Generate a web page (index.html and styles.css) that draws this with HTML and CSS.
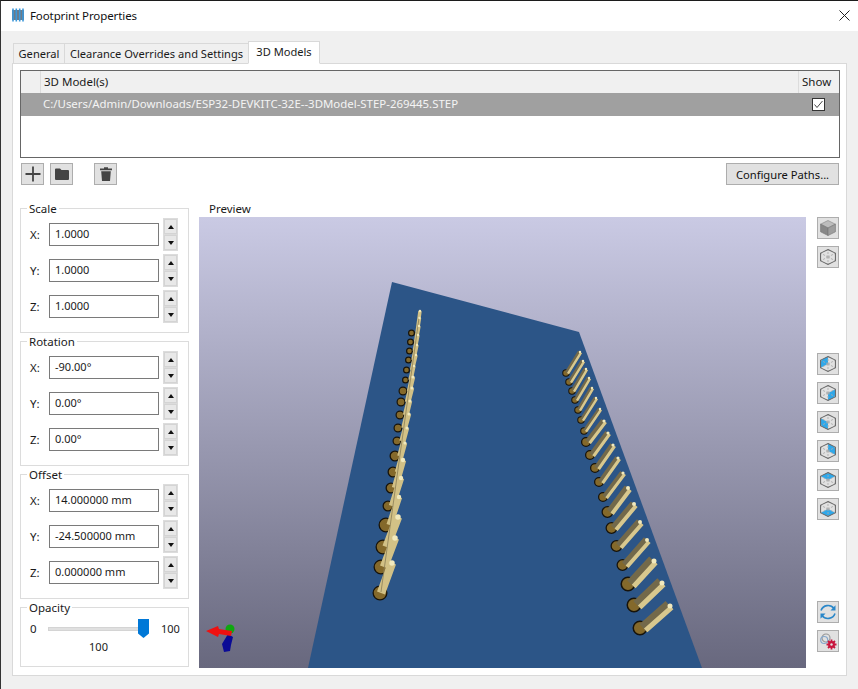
FILE: index.html
```html
<!DOCTYPE html>
<html lang="en">
<head>
<meta charset="utf-8">
<title>Footprint Properties</title>
<link rel="stylesheet" href="styles.css">
</head>
<body>
<svg class="defs" width="0" height="0" aria-hidden="true">
  <defs>
    <g id="cube">
      <path class="cube-back" d="M11 11V3.5M11 11L4.5 14.8M11 11L17.5 14.8M11 11L4.5 7.2M11 11L17.5 7.2M11 11V18.5"/>
      <path class="cube-line" d="M11 3.5L17.5 7.2V14.8L11 18.5L4.5 14.8V7.2Z"/>
    </g>
  </defs>
</svg>
<div class="window">
  <header class="titlebar">
    <svg class="app-icon" width="14" height="14" viewBox="0 0 14 14">
      <rect class="ai-body" x="1" y="2" width="12" height="10"/>
      <path class="ai-pins" d="M2 0.5V13.5M5.3 0.5V13.5M8.7 0.5V13.5M12 0.5V13.5"/>
    </svg>
    <span class="title">Footprint Properties</span>
    <svg class="close" width="11" height="11" viewBox="0 0 11 11"><path d="M0.5 0.5L10.5 10.5M10.5 0.5L0.5 10.5"/></svg>
  </header>
  <main class="content">
    <nav class="tabs">
      <span class="tab tab-general">General</span>
      <span class="tab tab-clear">Clearance Overrides and Settings</span>
      <span class="tab tab-active">3D Models</span>
    </nav>
    <section class="pane">
      <div class="grid">
        <div class="grid-head">
          <span class="corner"></span>
          <span class="head-model">3D Model(s)</span>
          <span class="head-show">Show</span>
        </div>
        <div class="grid-row">
          <span class="corner-row"></span>
          <span class="path">C:/Users/Admin/Downloads/ESP32-DEVKITC-32E--3DModel-STEP-269445.STEP</span>
          <span class="cell-show">
            <svg class="check" width="13" height="13" viewBox="0 0 13 13"><rect x="0.5" y="0.5" width="12" height="12"/><path d="M2.5 6.5L5 9.5L10.5 3"/></svg>
          </span>
        </div>
      </div>
      <div class="toolbar">
        <button class="btn icon-btn">
          <svg width="18" height="18" viewBox="0 0 18 18"><path class="plus" d="M9 1.5V16.5M1.5 9H16.5"/></svg>
        </button>
        <button class="btn icon-btn">
          <svg width="18" height="18" viewBox="0 0 18 18"><path class="solid" d="M2 4.5Q2 3.5 3 3.5H7L8.5 5H15Q16 5 16 6V14Q16 15 15 15H3Q2 15 2 14Z"/></svg>
        </button>
        <button class="btn icon-btn trash">
          <svg width="18" height="18" viewBox="0 0 18 18"><path class="solid" d="M3 3.5H7V2.2H11V3.5H15V5.2H3ZM4.2 6.2H13.8L13 16H5Z"/></svg>
        </button>
        <button class="btn paths-btn">Configure Paths...</button>
      </div>
      <div class="main">
        <div class="side">
          <div class="group">
            <span class="legend">Scale</span>
            <div class="field"><span class="axis">X:</span><span class="input">1.0000</span><span class="spin"><span class="sb"><i class="up"></i></span><span class="sb"><i class="down"></i></span></span></div>
            <div class="field"><span class="axis">Y:</span><span class="input">1.0000</span><span class="spin"><span class="sb"><i class="up"></i></span><span class="sb"><i class="down"></i></span></span></div>
            <div class="field"><span class="axis">Z:</span><span class="input">1.0000</span><span class="spin"><span class="sb"><i class="up"></i></span><span class="sb"><i class="down"></i></span></span></div>
          </div>
          <div class="group">
            <span class="legend">Rotation</span>
            <div class="field"><span class="axis">X:</span><span class="input">-90.00°</span><span class="spin"><span class="sb"><i class="up"></i></span><span class="sb"><i class="down"></i></span></span></div>
            <div class="field"><span class="axis">Y:</span><span class="input">0.00°</span><span class="spin"><span class="sb"><i class="up"></i></span><span class="sb"><i class="down"></i></span></span></div>
            <div class="field"><span class="axis">Z:</span><span class="input">0.00°</span><span class="spin"><span class="sb"><i class="up"></i></span><span class="sb"><i class="down"></i></span></span></div>
          </div>
          <div class="group">
            <span class="legend">Offset</span>
            <div class="field"><span class="axis">X:</span><span class="input">14.000000 mm</span><span class="spin"><span class="sb"><i class="up"></i></span><span class="sb"><i class="down"></i></span></span></div>
            <div class="field"><span class="axis">Y:</span><span class="input">-24.500000 mm</span><span class="spin"><span class="sb"><i class="up"></i></span><span class="sb"><i class="down"></i></span></span></div>
            <div class="field"><span class="axis">Z:</span><span class="input">0.000000 mm</span><span class="spin"><span class="sb"><i class="up"></i></span><span class="sb"><i class="down"></i></span></span></div>
          </div>
          <div class="group group-opacity">
            <span class="legend">Opacity</span>
            <div class="slider-row">
              <span class="s-min">0</span>
              <span class="track"><span class="thumb"></span></span>
              <span class="s-max">100</span>
            </div>
            <div class="s-value">100</div>
          </div>
        </div>
        <div class="preview-col">
          <div class="preview-label">Preview</div>
          <svg class="scene" width="607" height="451" viewBox="199 217 607 451">
            <defs>
              <linearGradient id="sky" x1="0" y1="0" x2="0" y2="1">
                <stop offset="0" stop-color="#cacae4"/>
                <stop offset="1" stop-color="#68687e"/>
              </linearGradient>
            </defs>
            <rect x="199" y="217" width="607" height="451" fill="url(#sky)"/>
            <polygon class="board" points="392,282 579,332 702,668 308,668"/>

            <!-- right header: solder pads -->
            <g transform="translate(-3 0)">
              <path class="pad-o" stroke-width="15" d="M643 628h0M637 605h0M631 584h0"/>
              <path class="pad-i" stroke-width="12" d="M643 628h0M637 605h0M631 584h0"/>
            </g>
            <g transform="translate(-2.5 0)">
              <path class="pad-o" stroke-width="12" d="M625 565h0M619 546h0M614 528h0M610 512h0"/>
              <path class="pad-i" stroke-width="9.5" d="M625 565h0M619 546h0M614 528h0M610 512h0"/>
            </g>
            <g transform="translate(-2 0)">
              <path class="pad-o" stroke-width="10" d="M605 497h0M601 482h0M597 468h0M592 455h0M588 442h0"/>
              <path class="pad-i" stroke-width="7.5" d="M605 497h0M601 482h0M597 468h0M592 455h0M588 442h0"/>
            </g>
            <g transform="translate(-1 0)">
              <path class="pad-o" stroke-width="7.5" d="M585 431h0M582 420h0M579 410h0M576 400h0M573 391h0M570 382h0M567 373h0"/>
              <path class="pad-i" stroke-width="5.5" d="M585 431h0M582 420h0M579 410h0M576 400h0M573 391h0M570 382h0M567 373h0"/>
            </g>

            <!-- right header: pins, back to front -->
            <path class="pin-d" stroke-width="4.6" d="M567 373L580 352M570 382L583 361M573 391L586 369M576 400L589 378M579 410L592 388M582 420L596 398M585 431L600 409"/>
            <path class="pin-l" stroke-width="2.4" transform="translate(1 .7)" d="M567 373L580 352M570 382L583 361M573 391L586 369M576 400L589 378M579 410L592 388M582 420L596 398M585 431L600 409"/>
            <path class="pin-d" stroke-width="6.4" d="M588 442L604 421M592 455L608 433M597 468L613 445M601 482L618 458M605 497L623 473"/>
            <path class="pin-l" stroke-width="3.2" transform="translate(1.6 1.1)" d="M588 442L604 421M592 455L608 433M597 468L613 445M601 482L618 458M605 497L623 473"/>
            <path class="pin-d" stroke-width="8" d="M610 512L628 488M614 528L634 504M619 546L640 522M625 565L647 540"/>
            <path class="pin-l" stroke-width="4" transform="translate(2.1 1.7)" d="M610 512L628 488M614 528L634 504M619 546L640 522M625 565L647 540"/>
            <path class="pin-d" stroke-width="10.5" d="M631 584L653 560M637 605L661 582M643 628L669 605"/>
            <path class="pin-l" stroke-width="5.2" transform="translate(2.7 2.4)" d="M631 584L653 560M637 605L661 582M643 628L669 605"/>
            <path class="pin-t" stroke-width="2.4" d="M580 352h0M583 361h0M586 369h0M589 378h0M592 388h0M596 398h0M600 409h0"/>
            <path class="pin-t" stroke-width="3.2" d="M604 421h0M608 433h0M613 445h0M618 458h0M623 473h0"/>
            <path class="pin-t" stroke-width="4" d="M628 488h0M634 504h0M640 522h0M647 540h0"/>
            <path class="pin-t" stroke-width="5" d="M654 561h0M662 583h0M670 606h0"/>

            <!-- left header: solder pads -->
            <g transform="translate(1.5 0)">
              <path class="pad-o" stroke-width="7" d="M410 333h0M409 342h0M408 351h0M407 360h0M405 370h0M404 380h0"/>
              <path class="pad-i" stroke-width="4.6" d="M410 333h0M409 342h0M408 351h0M407 360h0M405 370h0M404 380h0"/>
            </g>
            <path class="pad-o" stroke-width="9" d="M403 391h0M401 402h0M400 415h0M398 428h0M397 441h0"/>
            <path class="pad-o" stroke-width="11" d="M395 456h0M393 472h0M391 488h0M388 506h0"/>
            <path class="pad-o" stroke-width="15" d="M386 525h0M383 547h0M381 567h0M380 593h0"/>
            <path class="pad-i" stroke-width="6.6" d="M403 391h0M401 402h0M400 415h0M398 428h0M397 441h0"/>
            <path class="pad-i" stroke-width="8.4" d="M395 456h0M393 472h0M391 488h0M388 506h0"/>
            <path class="pad-i" stroke-width="12.4" d="M386 525h0M383 547h0M381 567h0M380 593h0"/>

            <!-- left header: pins, back to front -->
            <path class="pin-s" stroke-width="3.5" d="M417 333L420 311M415.6 342L419.5 318M414.3 351L419 326M413 360L418 335M411.6 370L417 345M410 380L416 355M408.6 391L414 366"/>
            <path class="pin-s" stroke-width="4.5" d="M407 402L413 377M405 415L412 388M403.4 428L410 401M401.5 441L409 414M399.4 456L407 428M397 472L405 443"/>
            <path class="pin-s" stroke-width="6.5" d="M395 488L403 460M392 506L401 478M389.6 525L399 497"/>
            <path class="pin-s" stroke-width="8.5" d="M386.5 547L398 517M384 567L395 538M381 593L392 563"/>
            <path class="pin-edge" d="M381 592L419 318"/>
            <path class="pin-t" stroke-width="2.4" d="M420 311h0M419.5 318h0M419 326h0M418 335h0M417 345h0M416 355h0M414 366h0"/>
            <path class="pin-t" stroke-width="3.2" d="M413 377h0M412 388h0M410 401h0M409 414h0M407 428h0M405 443h0"/>
            <path class="pin-t" stroke-width="4.4" d="M403 460h0M401 478h0M399 497h0"/>
            <path class="pin-t" stroke-width="5.5" d="M398 517h0M395 538h0M392 563h0"/>

            <!-- axis gizmo -->
            <circle class="ax-g" cx="230" cy="629" r="4.5"/>
            <path class="ax-b" d="M228 634L233 637L231 645L230 651L224 652L222 644Z"/>
            <path class="ax-r" d="M206 631L218 626L219 629L232 631L231 636L219 634L218 637Z"/>
          </svg>
        </div>
        <div class="view-col">
          <button class="btn view-btn">
            <svg width="16" height="16" viewBox="4 3 14 16" preserveAspectRatio="none"><path class="cube-top" d="M11 3.5L17.5 7.2L11 11L4.5 7.2Z"/><path class="cube-left" d="M4.5 7.2L11 11V18.5L4.5 14.8Z"/><path class="cube-right" d="M17.5 7.2L11 11V18.5L17.5 14.8Z"/></svg>
          </button>
          <button class="btn view-btn">
            <svg width="16" height="16" viewBox="4 3 14 16" preserveAspectRatio="none"><use href="#cube"/></svg>
          </button>
          <div class="view-gap"></div>
          <button class="btn view-btn">
            <svg width="16" height="16" viewBox="4 3 14 16" preserveAspectRatio="none"><path class="cube-fill" d="M11 3.5L4.5 7.2V14.8L11 11Z"/><use href="#cube"/></svg>
          </button>
          <button class="btn view-btn">
            <svg width="16" height="16" viewBox="4 3 14 16" preserveAspectRatio="none"><path class="cube-fill" d="M17.5 7.2V14.8L11 18.5V11Z"/><use href="#cube"/></svg>
          </button>
          <button class="btn view-btn">
            <svg width="16" height="16" viewBox="4 3 14 16" preserveAspectRatio="none"><path class="cube-fill" d="M4.5 7.2V14.8L11 18.5V11Z"/><use href="#cube"/></svg>
          </button>
          <button class="btn view-btn">
            <svg width="16" height="16" viewBox="4 3 14 16" preserveAspectRatio="none"><path class="cube-fill" d="M11 3.5L17.5 7.2V14.8L11 11Z"/><use href="#cube"/></svg>
          </button>
          <button class="btn view-btn">
            <svg width="16" height="16" viewBox="4 3 14 16" preserveAspectRatio="none"><path class="cube-fill" d="M11 3.5L17.5 7.2L11 11L4.5 7.2Z"/><use href="#cube"/></svg>
          </button>
          <button class="btn view-btn">
            <svg width="16" height="16" viewBox="4 3 14 16" preserveAspectRatio="none"><path class="cube-fill" d="M4.5 14.8L11 11L17.5 14.8L11 18.5Z"/><use href="#cube"/></svg>
          </button>
          <div class="view-gap view-gap-b"></div>
          <button class="btn view-btn">
            <svg width="20" height="20" viewBox="0 0 20 20"><path class="refresh" d="M3 8.5A7.5 7.5 0 0 1 16 6.5M17 11.5A7.5 7.5 0 0 1 4 13.5"/><path class="refresh-h" d="M17.5 3.2V8.5H12.5ZM2.5 16.8V11.5H7.5Z"/></svg>
          </button>
          <button class="btn view-btn">
            <svg width="20" height="20" viewBox="0 0 20 20"><circle class="set-a" cx="8" cy="7" r="4"/><circle class="set-b" cx="6.2" cy="9" r="3.5"/><circle class="gear" cx="13.5" cy="13.5" r="3.4"/><path class="gear-t" d="M13.5 8.5V18.5M8.5 13.5H18.5M10 10L17 17M17 10L10 17"/><circle class="gear-h" cx="13.5" cy="13.5" r="1.2"/></svg>
          </button>
        </div>
      </div>
    </section>
  </main>
</div>
</body>
</html>
```
FILE: styles.css
```css
* { box-sizing: border-box; }
html, body { margin: 0; padding: 0; }
body {
  width: 858px;
  height: 689px;
  overflow: hidden;
  background: #f0f0f0;
  font-family: "Noto Sans", "Open Sans", sans-serif;
  font-size: 11.5px;
  color: #1a1a1a;
}
.defs { display: block; height: 0; }
.window {
  width: 858px;
  height: 689px;
  border-top: 1px solid #1c1c1c;
  border-left: 1px solid #333;
  display: flex;
  flex-direction: column;
}
.titlebar {
  height: 30px;
  flex: none;
  background: #fff;
  display: flex;
  align-items: center;
  padding: 0 8px 2px 10px;
}
.app-icon { margin-right: 5px; }
.ai-body { fill: #6d7b88; }
.ai-pins { stroke: #3b97d9; stroke-width: 1.6; fill: none; }
.title { flex: 1; font-size: 11.5px; letter-spacing: -0.1px; color: #111; }
.close { margin-right: 0; }
.close path { stroke: #222; stroke-width: 1; fill: none; }

.content { flex: 1; padding: 10px 11px 13px 11px; display: flex; flex-direction: column; min-height: 0; }
.tabs { display: flex; align-items: flex-end; height: 23px; padding-left: 1px; flex: none; margin-bottom: -1px; position: relative; z-index: 1; font-size: 11.1px; }
.tab {
  height: 21px;
  line-height: 19px;
  background: #f0f0f0;
  border: 1px solid #d9d9d9;
  border-right: none;
  text-align: center;
  white-space: nowrap;
}
.tab-general { width: 51px; }
.tab-clear { width: 184px; }
.tab-active {
  width: 72px;
  height: 23px;
  line-height: 20px;
  background: #fff;
  border-right: 1px solid #d9d9d9;
  border-bottom: 1px solid #fff;
}
.pane {
  flex: 1;
  width: 835px;
  background: #fff;
  border: 1px solid #d9d9d9;
  padding: 6px 7px 0 7px;
  min-height: 0;
}
.grid {
  width: 820px;
  height: 88px;
  border: 1px solid #666;
  background: #fff;
}
.grid-head { display: flex; height: 22px; background: #f0f0f0; line-height: 21px; }
.corner { width: 20px; border-right: 1px solid #dcdcdc; }
.head-model { flex: 1; padding-left: 3px; border-right: 1px solid #dcdcdc; }
.head-show { width: 40px; padding-left: 3px; }
.grid-row { display: flex; height: 23px; background: #a0a0a0; line-height: 22px; color: #f4f4f4; }
.corner-row { width: 22px; }
.path { flex: 1; white-space: nowrap; font-size: 11.43px; }
.cell-show { width: 42px; display: flex; align-items: center; padding-left: 15px; }
.check { display: block; }
.check rect { fill: #fff; stroke: #333; }
.check path { fill: none; stroke: #444; stroke-width: 1; }

.toolbar { display: flex; margin-top: 5px; height: 22px; padding-left: 1px; }
.btn {
  display: block;
  margin: 0;
  padding: 0;
  background: #e1e1e1;
  border: 1px solid #adadad;
  font: inherit;
  color: #111;
}
.icon-btn { width: 23px; height: 22px; margin-right: 6px; display: flex; align-items: center; justify-content: center; }
.trash { margin-left: 15px; }
.paths-btn { margin-left: auto; width: 113px; height: 22px; font-size: 11.2px; }
.plus { stroke: #444; stroke-width: 1.8; fill: none; }
.solid { fill: #444; }

.main { display: flex; margin-top: 16px; }
.side { width: 169px; padding-top: 7px; flex: none; display: flex; flex-direction: column; gap: 8px; }
.group { border: 1px solid #dcdcdc; height: 125px; padding: 0 0 0 9px; }
.group-opacity { height: 60px; }
.legend {
  display: block;
  width: fit-content;
  height: 15.5px;
  line-height: 15px;
  margin: -8px 0 0 -3px;
  padding: 0 2px;
  background: #fff;
}
.field { display: flex; align-items: center; height: 36px; }
.axis { width: 19px; }
.input {
  width: 110px;
  height: 23px;
  border: 1px solid #7a7a7a;
  padding-left: 5px;
  line-height: 19px;
  background: #fff;
  white-space: nowrap;
  font-size: 11px;
}
.spin {
  width: 15px;
  height: 33px;
  margin-left: 4px;
  display: flex;
  flex-direction: column;
  gap: 1px;
  background: #dcdcdc;
}
.sb {
  flex: 1;
  margin: 1px 1px 0;
  background: #e8e8e8;
  border: 1px solid #d4d4d4;
  display: flex;
  align-items: center;
  justify-content: center;
}
.sb + .sb { margin: 0 1px 1px; }
.up, .down { display: block; width: 0; height: 0; border-left: 3.5px solid transparent; border-right: 3.5px solid transparent; }
.up { border-bottom: 4px solid #111; }
.down { border-top: 4px solid #111; }

.slider-row { display: flex; align-items: center; height: 22px; margin-top: 2px; }
.s-min { width: 18px; }
.track {
  width: 91px;
  height: 4px;
  background: #e0e0e0;
  border: 1px solid #d4d4d4;
  display: flex;
  justify-content: flex-end;
  align-items: center;
}
.thumb {
  display: block;
  flex: none;
  width: 11px;
  height: 19px;
  margin-right: -11px;
  background: #0078d7;
  clip-path: polygon(0 0, 100% 0, 100% 76%, 50% 100%, 0 76%);
}
.s-max { margin-left: 22px; font-size: 11px; }
.s-value { text-align: center; width: 137px; line-height: 16px; margin-top: -1px; font-size: 11px; }

.preview-col { width: 607px; margin-left: 10px; flex: none; }
.preview-label { height: 16px; line-height: 16px; padding-left: 10px; }
.scene { display: block; }
.board { fill: #2c5587; }
.pad-o { stroke: #17130a; stroke-linecap: round; fill: none; }
.pad-i { stroke: #84692b; stroke-linecap: round; fill: none; }
.pin-d { stroke: #73694a; fill: none; }
.pin-l { stroke: #d8c88e; fill: none; }
.pin-s { stroke: #d2c186; fill: none; }
.pin-edge { stroke: #8a7e57; stroke-width: 0.8; fill: none; }
.pin-t { stroke: #f1e9bd; stroke-linecap: round; fill: none; }
.ax-g { fill: #0fa80f; }
.ax-b { fill: #0a0a96; }
.ax-r { fill: #ee1111; }

.view-col { margin-left: 11px; width: 22px; padding-top: 16px; flex: none; display: flex; flex-direction: column; gap: 7px; }
.view-btn { width: 22px; height: 22px; display: flex; align-items: center; justify-content: center; }
.view-gap { height: 71px; }
.view-gap-b { height: 67px; }
.cube-line { fill: none; stroke: #666; stroke-width: 0.9; }
.cube-back { fill: none; stroke: #aaa; stroke-width: 0.8; stroke-dasharray: 2 1; }
.cube-fill { fill: #2fa8ea; }
.cube-top { fill: #bdbdbd; stroke: #888; stroke-width: 0.6; }
.cube-left { fill: #888; stroke: #777; stroke-width: 0.6; }
.cube-right { fill: #9e9e9e; stroke: #777; stroke-width: 0.6; }
.refresh { fill: none; stroke: #2a87c9; stroke-width: 1.6; }
.refresh-h { fill: #2a87c9; }
.set-a { fill: none; stroke: #999; stroke-width: 1.2; }
.set-b { fill: none; stroke: #86a8cc; stroke-width: 1.2; }
.gear { fill: #c8143c; }
.gear-t { stroke: #c8143c; stroke-width: 1.8; fill: none; }
.gear-h { fill: #e1e1e1; }
```
